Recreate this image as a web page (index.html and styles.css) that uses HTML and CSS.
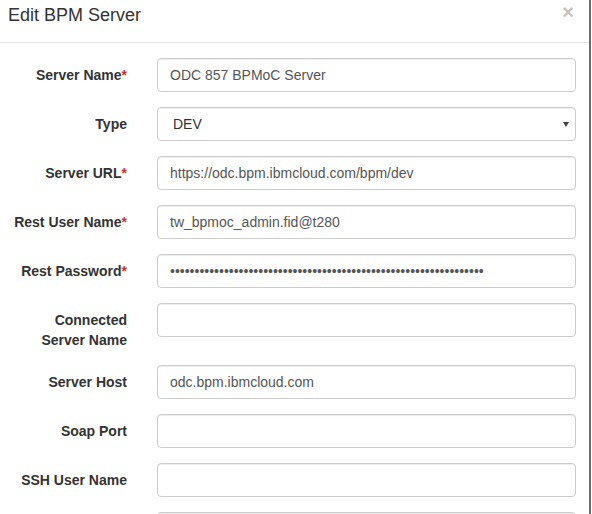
FILE: index.html
```html
<!DOCTYPE html>
<html>
<head>
<meta charset="utf-8">
<link rel="stylesheet" href="styles.css">
</head>
<body>
<div class="modal">
  <div class="modal-header">
    <h4 class="modal-title">Edit BPM Server</h4>
    <button class="close" type="button">×</button>
  </div>
  <form class="modal-body">
    <div class="form-group">
      <label class="control-label">Server Name<span class="req">*</span></label>
      <input class="form-control" type="text" value="ODC 857 BPMoC Server">
    </div>
    <div class="form-group">
      <label class="control-label">Type</label>
      <div class="select-wrap">
        <select class="form-control select"><option>DEV</option></select>
      </div>
    </div>
    <div class="form-group">
      <label class="control-label">Server URL<span class="req">*</span></label>
      <input class="form-control" type="text" value="https://odc.bpm.ibmcloud.com/bpm/dev">
    </div>
    <div class="form-group">
      <label class="control-label">Rest User Name<span class="req">*</span></label>
      <input class="form-control" type="text" value="tw_bpmoc_admin.fid@t280">
    </div>
    <div class="form-group">
      <label class="control-label">Rest Password<span class="req">*</span></label>
      <input class="form-control" type="password" value="aaaaaaaaaaaaaaaaaaaaaaaaaaaaaaaaaaaaaaaaaaaaaaaaaaaaaaaaaaaaaaaa">
    </div>
    <div class="form-group">
      <label class="control-label">Connected<br>Server Name</label>
      <input class="form-control" type="text" value="">
    </div>
    <div class="form-group">
      <label class="control-label">Server Host</label>
      <input class="form-control" type="text" value="odc.bpm.ibmcloud.com">
    </div>
    <div class="form-group">
      <label class="control-label">Soap Port</label>
      <input class="form-control" type="text" value="">
    </div>
    <div class="form-group">
      <label class="control-label">SSH User Name</label>
      <input class="form-control" type="text" value="">
    </div>
    <div class="form-group">
      <label class="control-label"></label>
      <input class="form-control" type="text" value="">
    </div>
  </form>
</div>
</body>
</html>
```
FILE: styles.css
```css
html, body {
  margin: 0;
  padding: 0;
  background: #fff;
  overflow: hidden;
}
body {
  font-family: "Liberation Sans", Arial, sans-serif;
  font-size: 14px;
  line-height: 20px;
  color: #333;
}
.modal {
  width: 591px;
  height: 514px;
  border-right: 2px solid #6a6a6a;
  box-sizing: border-box;
  overflow: hidden;
}
.modal-header {
  height: 42px;
  border-bottom: 1px solid #e5e5e5;
  display: flex;
  justify-content: space-between;
  align-items: flex-start;
  padding: 0 0 0 8px;
}
.modal-title {
  margin: 0;
  padding-top: 5px;
  font-size: 18px;
  font-weight: normal;
  line-height: 20px;
  color: #333;
}
.close {
  margin: 3px 15px 0 0;
  padding: 0;
  border: 0;
  background: none;
  font-family: "Liberation Sans", Arial, sans-serif;
  font-size: 20px;
  font-weight: bold;
  line-height: 18px;
  color: #c4c4c4;
}
.modal-body {
  padding: 15px 0 0 0;
  margin: 0;
}
.form-group {
  display: grid;
  grid-template-columns: 127px 419px;
  column-gap: 30px;
  margin-bottom: 15px;
}
.control-label {
  text-align: right;
  font-weight: bold;
  padding-top: 7px;
  line-height: 20px;
}
.req {
  color: #c9302c;
}
.form-control {
  display: block;
  box-sizing: border-box;
  width: 419px;
  height: 34px;
  padding: 6px 12px;
  font-family: "Liberation Sans", Arial, sans-serif;
  font-size: 14px;
  line-height: 20px;
  color: #555;
  background: #fff;
  border: 1px solid #ccc;
  border-radius: 4px;
  box-shadow: inset 0 1px 1px rgba(0,0,0,.075);
  margin: 0;
}
.select-wrap {
  position: relative;
}
.select {
  appearance: none;
  -webkit-appearance: none;
  padding-left: 15px;
  color: #333;
}
.select-wrap::after {
  content: "";
  position: absolute;
  left: 406px;
  top: 15px;
  width: 0;
  height: 0;
  border-left: 3px solid transparent;
  border-right: 3px solid transparent;
  border-top: 5px solid #444;
}
```
